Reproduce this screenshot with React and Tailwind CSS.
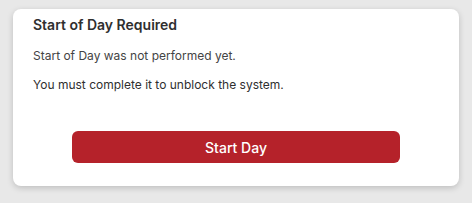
export default function App() {
  return (
    <div
      className="w-[472px] h-[203px] bg-[#e8e8e8] pt-[9px] pl-[13px]"
      style={{ fontFamily: "Inter, sans-serif" }}
    >
      <div className="w-[446px] h-[177px] bg-white rounded-lg shadow-[0_2px_6px_rgba(0,0,0,0.18)] pt-[6px] px-5 flex flex-col">
        <h2 className="text-[14px] leading-5 font-semibold text-[#2f2f2f]">Start of Day Required</h2>
        <p className="mt-[11px] text-[12px] leading-5 text-[#444]">Start of Day was not performed yet.</p>
        <p className="mt-[9px] text-[12px] leading-5 text-[#2f2f2f]">You must complete it to unblock the system.</p>
        <button className="mt-[36px] mx-auto w-[328px] h-8 rounded-md bg-[#b5222a] text-white text-[14px] font-medium">
          Start Day
        </button>
      </div>
    </div>
  );
}
